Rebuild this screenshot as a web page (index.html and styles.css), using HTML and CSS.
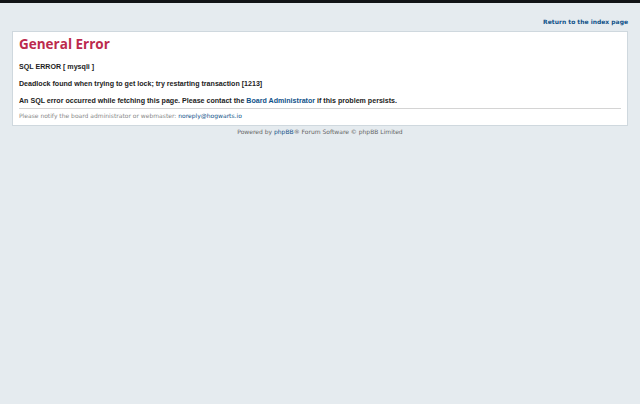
FILE: index.html
```html
<!DOCTYPE html>
<html lang="en">
<head>
    <meta charset="UTF-8">
    <meta name="viewport" content="width=device-width, initial-scale=1.0">
    <title>General Error</title>
    <link rel="stylesheet" href="styles.css">
</head>
<body>
    <div class="topbar"></div>
    <div class="wrap">
        <div class="linkbar">
            <a class="index-link" href="#">Return to the index page</a>
        </div>
        <div class="panel">
            <h1 class="title">General Error</h1>
            <p class="msg">SQL ERROR [ mysqli ]</p>
            <p class="msg">Deadlock found when trying to get lock; try restarting transaction [1213]</p>
            <p class="msg last">An SQL error occurred while fetching this page. Please contact the <a href="#">Board Administrator</a> if this problem persists.</p>
            <div class="notify">Please notify the board administrator or webmaster: <a href="#">noreply@hogwarts.io</a></div>
        </div>
        <div class="copyright">Powered by <a href="#">phpBB</a>&reg; Forum Software &copy; phpBB Limited</div>
    </div>
</body>
</html>
```

FILE: styles.css
```css
html, body{
    margin: 0;
    padding: 0;
    height: 100%;
}
body{
    background-color: #e5ebef;
    font-family: "Liberation Sans", Arial, sans-serif;
    color: #333;
}
a{
    color: #105289;
    text-decoration: none;
}
.topbar{
    height: 3px;
    background-color: #121416;
}
.wrap{
    padding: 0 12px;
}
.linkbar{
    display: flex;
    justify-content: flex-end;
    padding-top: 14px;
    height: 14px;
}
.index-link{
    font-family: "DejaVu Sans", Verdana, sans-serif;
    font-size: 6px;
    font-weight: bold;
    line-height: 10px;
}
.panel{
    background-color: #fff;
    border: 1px solid #cfd8de;
    padding: 3px 6px 5px;
}
.title{
    font-family: "Open Sans", "Liberation Sans", sans-serif;
    font-size: 13.5px;
    font-weight: bold;
    color: #bc2a4d;
    margin: 0 0 9px;
    line-height: 18px;
}
.msg{
    font-size: 7.1px;
    font-weight: bold;
    line-height: 10px;
    margin: 0 0 7px;
    color: #222;
}
.msg.last{
    margin-bottom: 2px;
}
.notify{
    border-top: 1px solid #d4d4d4;
    padding-top: 2px;
    font-family: "DejaVu Sans", Verdana, sans-serif;
    font-size: 6px;
    line-height: 9px;
    color: #888;
}
.copyright{
    text-align: center;
    font-family: "DejaVu Sans", Verdana, sans-serif;
    font-size: 6px;
    color: #666;
    padding-top: 2px;
}
```
